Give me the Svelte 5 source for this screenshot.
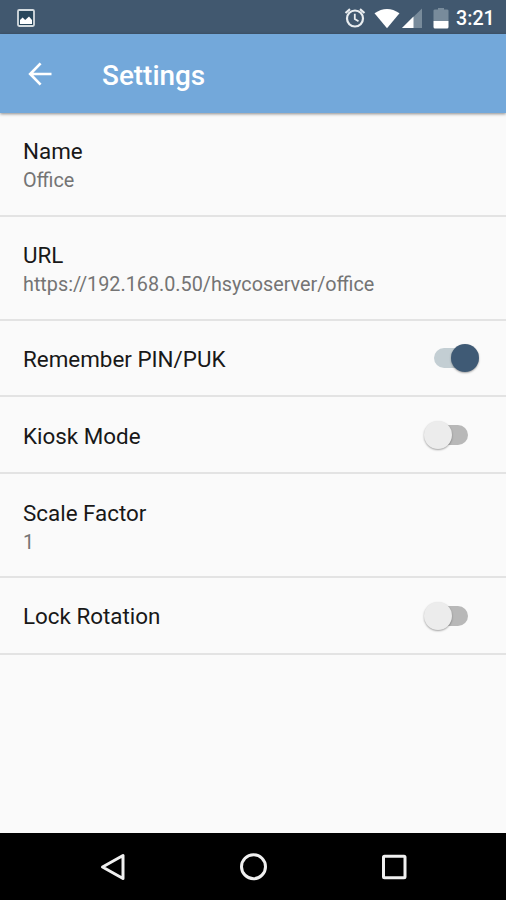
<script>
  let items = $state([
    { title: 'Name', value: 'Office' },
    { title: 'URL', value: 'https://192.168.0.50/hsycoserver/office' },
    { title: 'Remember PIN/PUK', on: true },
    { title: 'Kiosk Mode', on: false },
    { title: 'Scale Factor', value: '1' },
    { title: 'Lock Rotation', on: false }
  ]);
</script>

<div class="screen">
  <header class="status">
    <svg class="picture" width="18" height="18" viewBox="0 0 18 18">
      <rect x="1" y="1" width="16" height="16" rx="1.2" fill="#29475c" stroke="#d5dce0" stroke-width="1.8" />
      <path d="M3 15V11L5.6 8.6L8.2 11L12 7.4L15 11V15Z" fill="#fff" />
    </svg>
    <svg class="tray" width="108" height="24" viewBox="0 0 108 24">
      <g fill="none" stroke="#e9edf0" stroke-width="2.2">
        <circle cx="11" cy="12.5" r="8" />
        <path d="M1.5 7L6 3.2M20.5 7L16 3.2" />
        <path d="M10.8 7.7V13L14.5 15.2" stroke-width="1.8" />
      </g>
      <path d="M30.5 7.2Q43 -1.4 55.5 7.2L43 22.2Z" fill="#fff" />
      <path d="M78 2.5V22H58Z" fill="#788b9b" />
      <path d="M69.5 10.5V22H58Z" fill="#fff" />
      <path d="M91 3.5H94V2H100V3.5H103Q104.500 3.5 104.500 4.5V15H89.500V4.5Q89.500 3.5 91 3.5Z" fill="#788b9b" />
      <path d="M89.500 15H104.500V21Q104.500 22.5 103 22.5H91Q89.500 22.5 89.500 21Z" fill="#fff" />
    </svg>
    <span class="time">3:21</span>
  </header>

  <div class="appbar">
    <svg width="24" height="24" viewBox="0 0 24 24" fill="none" stroke="#fff" stroke-width="2.7">
      <path d="M12.6 1.4L2.2 12L12.6 22.6M2.2 12H23.5" />
    </svg>
    <h1>Settings</h1>
  </div>

  <main>
    {#each items as item}
      <section class="row" class:double={item.value}>
        <div class="copy">
          <div class="title">{item.title}</div>
          {#if item.value}<div class="value">{item.value}</div>{/if}
        </div>
        {#if item.on !== undefined}
          <button
            class="switch"
            class:on={item.on}
            role="switch"
            aria-checked={item.on}
            aria-label={item.title}
            onclick={() => (item.on = !item.on)}
          ><span class="thumb"></span></button>
        {/if}
      </section>
    {/each}
  </main>

  <nav>
    <svg width="28" height="30" viewBox="0 0 28 30"><path d="M24 3.5V26.5L3.5 15Z" /></svg>
    <svg width="28" height="30" viewBox="0 0 28 30"><circle cx="13.5" cy="14.7" r="12" /></svg>
    <svg width="28" height="30" viewBox="0 0 28 30"><rect x="3.5" y="4.2" width="21.5" height="21.5" rx="1" /></svg>
  </nav>
</div>

<style>
  :global(body) { margin: 0; }
  .screen {
    width: 506px;
    height: 900px;
    display: flex;
    flex-direction: column;
    overflow: hidden;
    background: #fafafa;
    font-family: Roboto, 'Liberation Sans', sans-serif;
  }
  .status {
    flex: none;
    height: 34px;
    box-sizing: border-box;
    padding: 0 11px 0 17px;
    display: flex;
    align-items: center;
    background: #41586f;
    color: #fff;
  }
  .picture { margin-top: 1px; }
  .tray { margin: 1px 4.5px 0 auto; }
  .time {
    width: 39px;
    font-size: 19.7px;
    font-weight: 500;
    line-height: 24px;
    margin-top: 3px;
    white-space: nowrap;
  }
  .appbar {
    flex: none;
    height: 79px;
    box-sizing: border-box;
    padding-left: 28px;
    display: flex;
    align-items: center;
    gap: 50px;
    background: #73a8da;
    box-shadow: 0 1px 3px rgba(0, 0, 0, 0.45);
    color: #fff;
    z-index: 1;
  }
  h1 { margin: 4px 0 0; font-size: 27.9px; font-weight: 500; line-height: 34px; }
  main { flex: 1; }
  .row {
    height: 76.8px;
    box-sizing: border-box;
    padding: 1px 38px 0 23px;
    border-bottom: 2px solid #e3e3e3;
    display: flex;
    align-items: center;
    justify-content: space-between;
  }
  .row.double { height: 103.8px; padding-top: 7px; }
  .title { font-size: 22.4px; line-height: 28px; color: #181818; }
  .row:not(.double) .copy { padding-top: 1px; }
  .value { font-size: 19.8px; line-height: 32px; color: #747474; }
  .switch {
    position: relative;
    width: 34px;
    height: 20px;
    padding: 0;
    border: 0;
    border-radius: 10px;
    background: #b8b8b8;
  }
  .switch.on { background: #c3ced3; }
  .thumb {
    position: absolute;
    left: -10.5px;
    top: -4px;
    width: 28px;
    height: 28px;
    border-radius: 50%;
    background: #ececec;
    box-shadow: 0 1px 2px rgba(0, 0, 0, 0.35);
  }
  .on .thumb { left: 17px; background: #3f5a75; }
  nav {
    flex: none;
    height: 67px;
    box-sizing: border-box;
    padding: 0 98px 0 99px;
    display: flex;
    align-items: center;
    justify-content: space-between;
    background: #000;
  }
  nav svg { fill: none; stroke: #f0f0f0; stroke-width: 3; stroke-linejoin: round; }
</style>
